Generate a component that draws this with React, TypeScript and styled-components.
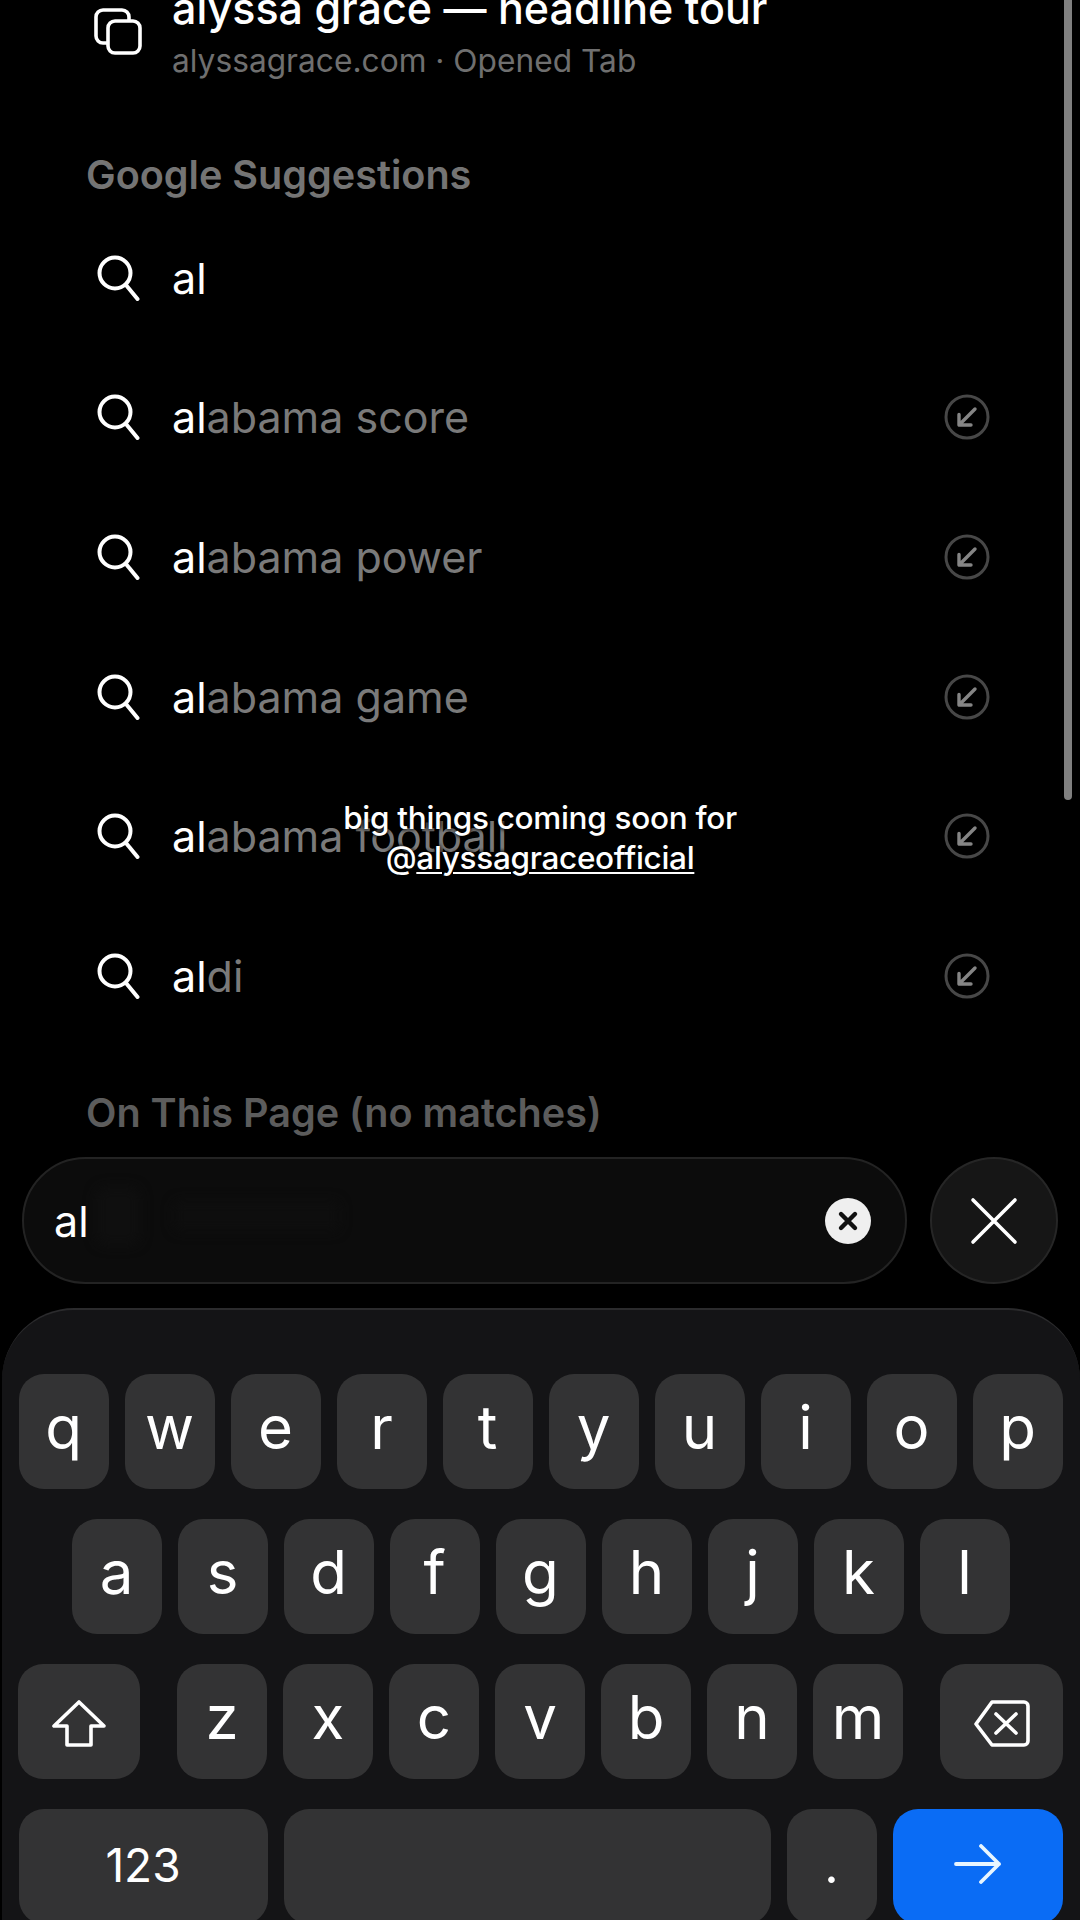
import React from 'react';
import styled, { createGlobalStyle } from 'styled-components';

const GlobalStyle = createGlobalStyle`
  html, body {
    margin: 0;
    padding: 0;
    background: #000;
  }
  * {
    box-sizing: border-box;
  }
`;

const suggestions = [
  { rest: '', fill: false },
  { rest: 'abama score', fill: true },
  { rest: 'abama power', fill: true },
  { rest: 'abama game', fill: true },
  { rest: 'abama football', fill: true },
  { rest: 'di', fill: true },
];

const SearchIcon = () => (
  <svg width="43" height="46" viewBox="0 0 43 46" fill="none" stroke="#fff" strokeWidth="4" strokeLinecap="round">
    <circle cx="18" cy="18" r="15.5" />
    <path d="M29 30L40.5 44" />
  </svg>
);

const CopyIcon = () => (
  <svg width="48" height="47" viewBox="0 0 48 47" fill="none" stroke="#fff" strokeWidth="3.6">
    <path d="M13 35H9a7 7 0 0 1-7-7V9a7 7 0 0 1 7-7h19a7 7 0 0 1 7 7v3" />
    <rect x="14" y="13" width="32" height="32" rx="7" />
  </svg>
);

const FillIcon = () => (
  <svg width="46" height="46" viewBox="0 0 46 46" fill="none" strokeLinecap="round" strokeLinejoin="round">
    <circle cx="23" cy="23" r="21" stroke="#474747" strokeWidth="3" />
    <path d="M31 15L15 31M15 20.5V31H27" stroke="#858585" strokeWidth="3.4" />
  </svg>
);

const ClearIcon = () => (
  <svg width="22" height="22" viewBox="0 0 22 22" fill="none" stroke="#111" strokeWidth="4.4" strokeLinecap="round">
    <path d="M4 4L18 18M18 4L4 18" />
  </svg>
);

const CloseIcon = () => (
  <svg width="48" height="48" viewBox="0 0 48 48" fill="none" stroke="#fff" strokeWidth="3.6" strokeLinecap="round">
    <path d="M3 3L45 45M45 3L3 45" />
  </svg>
);

const ShiftIcon = () => (
  <svg width="54" height="48" viewBox="0 0 54 48" fill="none" stroke="#fff" strokeWidth="3.6" strokeLinejoin="round">
    <path d="M27 2L2 26H15V45H39V26H52Z" />
  </svg>
);

const DeleteIcon = () => (
  <svg width="56" height="48" viewBox="0 0 56 48" fill="none" stroke="#fff" strokeWidth="3.6" strokeLinejoin="round" strokeLinecap="round">
    <path d="M18 2H50a4 4 0 0 1 4 4V41a4 4 0 0 1-4 4H18L2 24Z" />
    <path d="M22 14L42 33M42 14L22 33" />
  </svg>
);

const GoIcon = () => (
  <svg width="48" height="40" viewBox="0 0 48 40" fill="none" stroke="#e8f6ff" strokeWidth="3.8" strokeLinecap="round" strokeLinejoin="round">
    <path d="M2 20H45M27 2L45 20L27 38" />
  </svg>
);

const keyRows = ['qwertyuiop', 'asdfghjkl', 'zxcvbnm'];

const App = (): React.ReactElement => (
  <Page>
    <GlobalStyle />
    <ResultsArea>
      <TabRow>
        <RowIcon>
          <CopyIcon />
        </RowIcon>
        <TabText>
          <TabTitle>alyssa grace — headline tour</TabTitle>
          <TabSub>alyssagrace.com · Opened Tab</TabSub>
        </TabText>
      </TabRow>
      <SectionHeader>Google Suggestions</SectionHeader>
      {suggestions.map((s) => (
        <SuggestionRow key={s.rest}>
          <RowIcon $inset={11}>
            <SearchIcon />
          </RowIcon>
          <SuggestionText>
            al<Completion>{s.rest}</Completion>
          </SuggestionText>
          {s.fill && <FillIcon />}
        </SuggestionRow>
      ))}
      <SectionHeader $dim>On This Page (no matches)</SectionHeader>
    </ResultsArea>

    <ScrollThumb />

    <Caption>
      big things coming soon for
      <br />@<CaptionLink>alyssagraceofficial</CaptionLink>
    </Caption>

    <SearchDock>
      <SearchField>
        <GhostIcon />
        <GhostLabel />
        <FieldText>al</FieldText>
        <ClearButton>
          <ClearIcon />
        </ClearButton>
      </SearchField>
      <CloseButton>
        <CloseIcon />
      </CloseButton>
    </SearchDock>

    <Keyboard>
      <KeyRow>
        {keyRows[0].split('').map((k) => (
          <Key key={k}>{k}</Key>
        ))}
      </KeyRow>
      <KeyRow>
        {keyRows[1].split('').map((k) => (
          <Key key={k}>{k}</Key>
        ))}
      </KeyRow>
      <KeyRow $spread>
        <IconKey $width={122}>
          <ShiftIcon />
        </IconKey>
        <KeyGroup>
          {keyRows[2].split('').map((k) => (
            <Key key={k}>{k}</Key>
          ))}
        </KeyGroup>
        <IconKey $width={123}>
          <DeleteIcon />
        </IconKey>
      </KeyRow>
      <KeyRow>
        <NumbersKey $width={249}>123</NumbersKey>
        <Key $width={487} />
        <PeriodKey>.</PeriodKey>
        <GoKey $width={170}>
          <GoIcon />
        </GoKey>
      </KeyRow>
    </Keyboard>
  </Page>
);

const Page = styled.div`
  position: relative;
  width: 1080px;
  height: 1920px;
  overflow: hidden;
  background: #000;
  color: #fff;
  font-family: Inter, 'Liberation Sans', sans-serif;
`;

const ResultsArea = styled.div`
  height: 1157px;
  overflow: hidden;
  padding: 0 0 0 86px;
`;

const RowIcon = styled.div<{ $inset?: number }>`
  width: 86px;
  flex: none;
  display: flex;
  padding-left: ${(props) => props.$inset || 8}px;
`;

const TabRow = styled.div`
  display: flex;
  align-items: center;
  height: 140px;
  margin-top: -39px;
`;

const TabText = styled.div`
  display: flex;
  flex-direction: column;
  gap: 11px;
  margin-top: 1px;
`;

const TabTitle = styled.div`
  font-size: 43px;
  line-height: 48px;
  font-weight: 500;
`;

const TabSub = styled.div`
  font-size: 31.7px;
  line-height: 36px;
  color: #6f6f6f;
`;

const SectionHeader = styled.div<{ $dim?: boolean }>`
  height: 107px;
  padding-top: ${(props) => (props.$dim ? 44 : 51)}px;
  font-size: 39.6px;
  line-height: 46px;
  font-weight: 600;
  color: ${(props) => (props.$dim ? '#5c5c5c' : '#747474')};
`;

const SuggestionRow = styled.div`
  display: flex;
  align-items: center;
  height: 139.6px;
  padding-right: 90px;
`;

const SuggestionText = styled.div`
  flex: 1;
  font-size: 43px;
  color: #fff;
`;

const Completion = styled.span`
  color: #7a7a7a;
`;

const ScrollThumb = styled.div`
  position: absolute;
  top: 0;
  right: 8px;
  width: 8px;
  height: 800px;
  border-radius: 0 0 4px 4px;
  background: #808080;
`;

const Caption = styled.div`
  position: absolute;
  top: 798px;
  left: 0;
  width: 100%;
  text-align: center;
  font-size: 31.5px;
  line-height: 40px;
  font-weight: 500;
  letter-spacing: -0.3px;
  text-shadow: 0 0 4px #000, 0 0 4px #000;
`;

const CaptionLink = styled.span`
  text-decoration: underline;
  text-decoration-thickness: 2px;
  text-underline-offset: 3px;
`;

const SearchDock = styled.div`
  display: flex;
  gap: 23px;
  height: 127px;
  padding: 0 22px;
`;

const SearchField = styled.div`
  position: relative;
  flex: 1;
  display: flex;
  align-items: center;
  justify-content: space-between;
  padding: 0 34px 0 30px;
  border: 2px solid #232323;
  border-radius: 64px;
  background: #0c0c0c;
`;

const GhostIcon = styled.div`
  position: absolute;
  left: 72px;
  top: 28px;
  width: 44px;
  height: 58px;
  border-radius: 10px;
  background: #0f0f0f;
  filter: blur(6px);
`;

const GhostLabel = styled.div`
  position: absolute;
  left: 150px;
  top: 42px;
  width: 165px;
  height: 30px;
  border-radius: 6px;
  background: #0e0e0e;
  filter: blur(6px);
`;

const FieldText = styled.div`
  position: relative;
  font-size: 43px;
`;

const ClearButton = styled.div`
  position: relative;
  width: 46px;
  height: 46px;
  border-radius: 50%;
  background: #efefef;
  display: flex;
  align-items: center;
  justify-content: center;
`;

const CloseButton = styled.div`
  width: 128px;
  flex: none;
  display: flex;
  align-items: center;
  justify-content: center;
  border: 2px solid #262626;
  border-radius: 50%;
  background: #161616;
`;

const Keyboard = styled.div`
  display: flex;
  flex-direction: column;
  gap: 30px;
  height: 612px;
  margin: 24px 0 0 2px;
  padding: 64px 17px 0 16px;
  border-top: 2px solid #2b2b2d;
  border-radius: 72px 72px 0 0;
  background: #141416;
`;

const KeyRow = styled.div<{ $spread?: boolean }>`
  display: flex;
  justify-content: ${(props) => (props.$spread ? 'space-between' : 'center')};
  gap: 16px;
`;

const KeyGroup = styled.div`
  display: flex;
  gap: 16px;
`;

const Key = styled.div<{ $width?: number }>`
  width: ${(props) => props.$width || 90}px;
  height: 115px;
  flex: none;
  display: flex;
  align-items: center;
  justify-content: center;
  padding-bottom: 9px;
  border-radius: 25px;
  background: #333334;
  font-size: 60px;
  line-height: 1;
  color: #fff;
`;

const IconKey = styled(Key)`
  padding: 4px 0 0;
`;

const NumbersKey = styled(Key)`
  font-size: 46px;
  padding-bottom: 4px;
`;

const PeriodKey = styled(Key)`
  font-size: 50px;
  padding-bottom: 4px;
`;

const GoKey = styled(Key)`
  background: #0a6cf5;
  padding-bottom: 6px;
`;

export default App;
